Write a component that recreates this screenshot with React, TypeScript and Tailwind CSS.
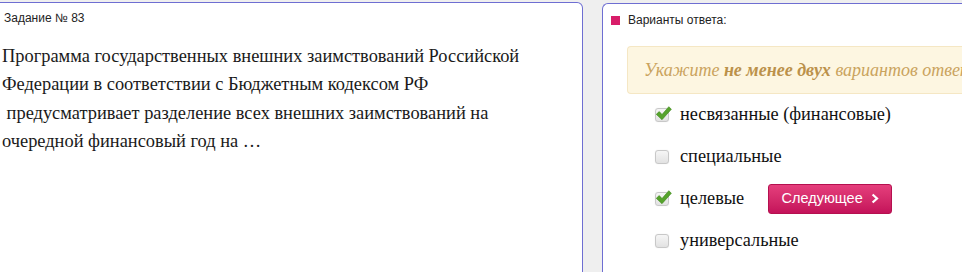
import React from "react";

const SERIF = "font-['Liberation_Serif','Times_New_Roman',serif]";
const SANS = "font-['Liberation_Sans',Arial,sans-serif]";

type Option = { id: string; label: string; checked: boolean; next?: boolean };

const OPTIONS: Option[] = [
  { id: "a", label: "несвязанные (финансовые)", checked: true },
  { id: "b", label: "специальные", checked: false },
  { id: "c", label: "целевые", checked: true, next: true },
  { id: "d", label: "универсальные", checked: false },
];

function CheckBox({ checked }: { checked: boolean }) {
  return (
    <span className="relative inline-block h-[14px] w-[14px] shrink-0 rounded-[3px] border border-[#c8c8c8] bg-gradient-to-b from-[#f6f6f6] to-[#e2e2e2] shadow-[0_0_1px_rgba(0,0,0,0.15)]">
      {checked && (
        <svg viewBox="0 0 16 16" className="absolute left-[-1px] top-[-4px] h-[17px] w-[17px]">
          <path
            d="M1.2 8.8 L4 6.2 L6.6 9 L13 1.6 L15.4 4 L6.6 13.8 Z"
            fill="#56a32c"
            stroke="#3f8a1d"
            strokeWidth="0.6"
            strokeLinejoin="round"
          />
        </svg>
      )}
    </span>
  );
}

function NextButton() {
  return (
    <button
      type="button"
      className={`${SANS} flex h-[30px] w-[124px] items-center justify-center gap-[8px] rounded-[3px] border border-[#b5104f] bg-gradient-to-b from-[#e53e7c] to-[#c4115a] text-[14.5px] text-white`}
    >
      <span>Следующее</span>
      <svg viewBox="0 0 10 12" className="h-[11px] w-[8px]">
        <path d="M2 1 L7.5 6 L2 11" fill="none" stroke="#fff" strokeWidth="2.8" strokeLinejoin="miter" />
      </svg>
    </button>
  );
}

export default function App() {
  return (
    <div className="flex h-[272px] w-[962px] gap-[19px] overflow-hidden bg-[#efefef]">
      <section className="mt-[2px] h-[300px] w-[583px] shrink-0 rounded-tr-[6px] border border-l-0 border-[#6e6ed2] bg-white pl-[2px]">
        <div className={`${SANS} pl-[2px] pt-[7px] text-[12px] leading-[16px] text-[#222]`}>Задание № 83</div>
        <p className={`${SERIF} mt-[16px] whitespace-pre-line text-[18.4px] leading-[28.3px] text-[#1a1a1a]`}>
          {"Программа государственных внешних заимствований Российской\nФедерации в соответствии с Бюджетным кодексом РФ\n\u00a0предусматривает разделение всех внешних заимствований на\nочередной финансовый год на …"}
        </p>
      </section>

      <section className="mt-[3px] h-[300px] w-[400px] shrink-0 rounded-tl-[6px] border border-r-0 border-[#6e6ed2] bg-white">
        <div className="flex items-center gap-[8px] pl-[8px] pt-[8px]">
          <span className="h-[9px] w-[9px] bg-[#d81d69]" />
          <span className={`${SANS} text-[12px] leading-[16px] text-[#222]`}>Варианты ответа:</span>
        </div>
        <div className="ml-[24px] mt-[18px] flex h-[48px] items-center whitespace-nowrap rounded-l-[4px] border border-r-0 border-[#f5e7c4] bg-[#fdf6e1] pl-[16px]">
          <span className={`${SERIF} text-[18px] italic text-[#caa35d]`}>
            Укажите <b className="text-[#bb914a]">не менее двух</b> вариантов ответа
          </span>
        </div>
        <ul className="ml-[52px] mt-[0px] flex flex-col">
          {OPTIONS.map((o) => (
            <li key={o.id} className="flex h-[41.9px] items-center">
              <CheckBox checked={o.checked} />
              <span className={`${SERIF} ml-[11px] text-[18.3px] text-[#111]`}>{o.label}</span>
              {o.next && (
                <span className="ml-[24px]">
                  <NextButton />
                </span>
              )}
            </li>
          ))}
        </ul>
      </section>
    </div>
  );
}
